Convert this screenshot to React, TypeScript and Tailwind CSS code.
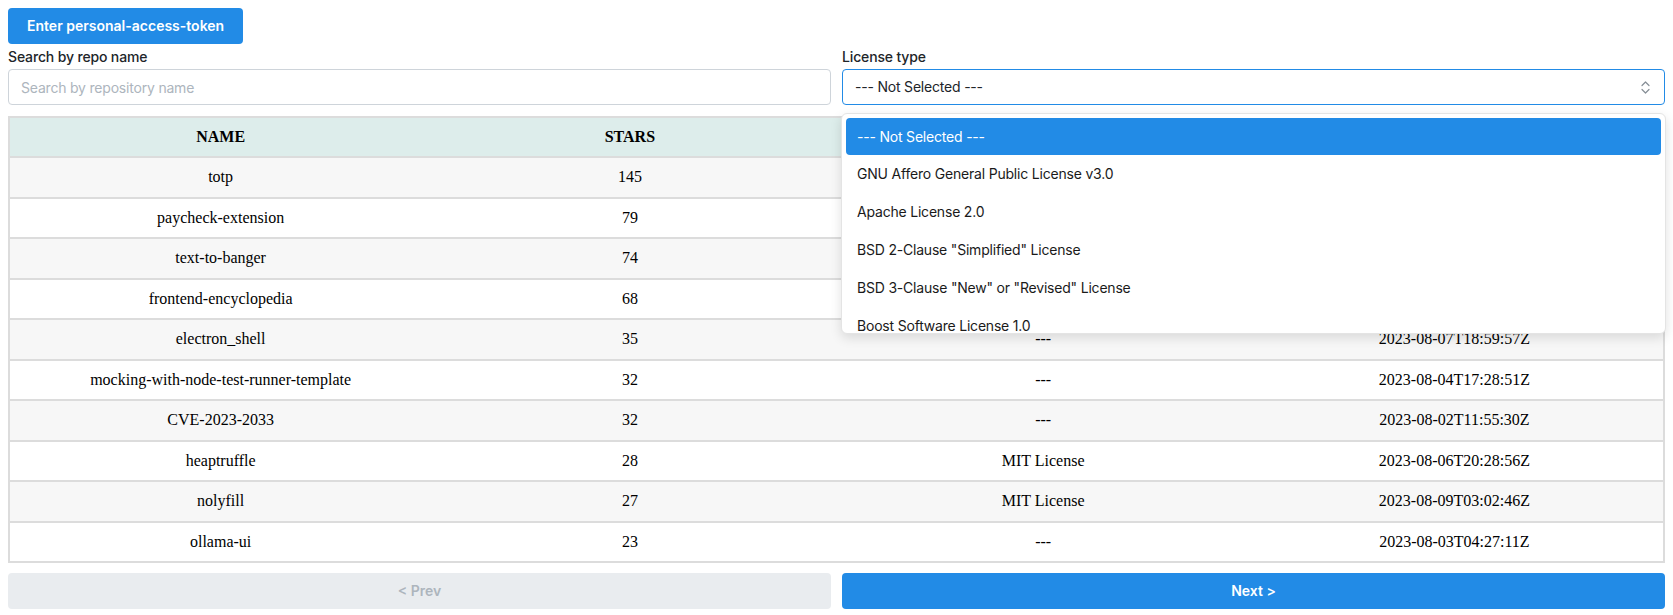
import React from "react";

const rows: [string, string, string, string][] = [
  ["totp", "145", "MIT License", "2023-08-08T09:12:44Z"],
  ["paycheck-extension", "79", "---", "2023-08-05T14:21:09Z"],
  ["text-to-banger", "74", "MIT License", "2023-08-07T22:40:18Z"],
  ["frontend-encyclopedia", "68", "---", "2023-08-01T06:33:27Z"],
  ["electron_shell", "35", "---", "2023-08-07T18:59:57Z"],
  ["mocking-with-node-test-runner-template", "32", "---", "2023-08-04T17:28:51Z"],
  ["CVE-2023-2033", "32", "---", "2023-08-02T11:55:30Z"],
  ["heaptruffle", "28", "MIT License", "2023-08-06T20:28:56Z"],
  ["nolyfill", "27", "MIT License", "2023-08-09T03:02:46Z"],
  ["ollama-ui", "23", "---", "2023-08-03T04:27:11Z"],
];

const options = [
  "--- Not Selected ---",
  "GNU Affero General Public License v3.0",
  "Apache License 2.0",
  'BSD 2-Clause "Simplified" License',
  'BSD 3-Clause "New" or "Revised" License',
  "Boost Software License 1.0",
  "Creative Commons Zero v1.0 Universal",
];

function Chevrons() {
  return (
    <svg width="9" height="13" viewBox="0 0 9 13" fill="none" stroke="#868e96" strokeWidth="1.2" strokeLinecap="round" strokeLinejoin="round">
      <path d="M1 4.5 L4.5 1 L8 4.5" />
      <path d="M1 8.5 L4.5 12 L8 8.5" />
    </svg>
  );
}

export default function App() {
  return (
    <div className="min-h-screen bg-white px-2 pt-2 text-[#212529] font-['Inter','Liberation_Sans',sans-serif]">
      <button className="h-9 rounded bg-[#228be6] px-[19px] text-sm font-semibold text-white">
        Enter personal-access-token
      </button>

      <div className="mt-[3px] grid grid-cols-2 gap-x-[11px]">
        <div>
          <label className="mb-[2px] block text-sm font-medium leading-5 tracking-[-0.15px]">Search by repo name</label>
          <input
            className="h-9 w-full rounded border border-[#ced4da] bg-white px-3 text-sm tracking-[-0.2px] outline-none placeholder:text-[#adb5bd]"
            placeholder="Search by repository name"
          />
        </div>
        <div className="relative">
          <label className="mb-[2px] block text-sm font-medium leading-5 tracking-[-0.15px]">License type</label>
          <div className="flex h-9 w-full items-center justify-between rounded border border-[#228be6] bg-white pl-3 pr-[14px] text-sm tracking-[-0.2px]">
            <span>--- Not Selected ---</span>
            <Chevrons />
          </div>
          <div className="absolute left-[-1px] right-[-1px] top-[66px] z-10 h-[221px] overflow-hidden rounded-md border border-[#e4e4e4] bg-white pt-1 shadow-[0_4px_12px_rgba(0,0,0,0.12)]">
            {options.map((o, i) => (
              <div
                key={o}
                className={
                  i === 0
                    ? "mx-1 flex h-[37px] items-center rounded bg-[#228be6] px-[11px] text-sm tracking-[-0.2px] text-white"
                    : "mx-1 flex h-[38px] items-center px-[11px] text-sm tracking-[-0.2px] text-[#1a1a1a]"
                }
              >
                {o}
              </div>
            ))}
          </div>
        </div>
      </div>

      <div className="mt-[11px] border-2 border-[#dcdcdc]">
        <table className="w-full table-fixed border-separate border-spacing-0 font-['Liberation_Serif',serif] text-base text-black">
          <thead>
            <tr className="h-[40px] bg-[#ddedeb]">
              <th className="border-b-2 border-[#dcdcdc] pl-2 font-bold">NAME</th>
              <th className="border-b-2 border-[#dcdcdc] font-bold">STARS</th>
              <th className="border-b-2 border-[#dcdcdc] font-bold">LICENSE</th>
              <th className="border-b-2 border-[#dcdcdc] pr-1 font-bold">UPDATED AT</th>
            </tr>
          </thead>
          <tbody>
            {rows.map((r, i) => {
              const last = i === rows.length - 1;
              const bg = i % 2 === 0 ? "bg-[#f7f7f7]" : "bg-white";
              const cell = last ? "text-center" : "border-b-2 border-[#dcdcdc] text-center";
              return (
                <tr key={r[0]} className={`${bg} ${last ? "h-[38.5px]" : "h-[40.5px]"}`}>
                  <td className={`${cell} pl-2`}>{r[0]}</td>
                  <td className={cell}>{r[1]}</td>
                  <td className={cell}>{r[2]}</td>
                  <td className={`${cell} pr-1`}>{r[3]}</td>
                </tr>
              );
            })}
          </tbody>
        </table>
      </div>

      <div className="mt-[10px] grid grid-cols-2 gap-x-[11px]">
        <button className="h-9 rounded bg-[#e9ecef] text-sm font-semibold text-[#adb5bd]">&lt; Prev</button>
        <button className="h-9 rounded bg-[#228be6] text-sm font-semibold text-white">Next &gt;</button>
      </div>
    </div>
  );
}
